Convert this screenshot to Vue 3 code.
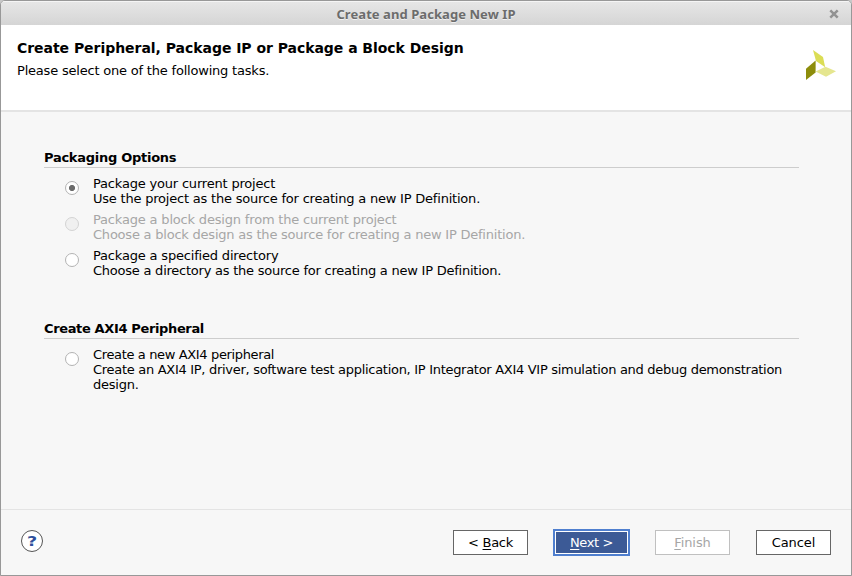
<script setup>
import { ref } from 'vue'

const selected = ref('project')

// tracking: letter spacing of each text, in px
const sections = [
  {
    title: 'Packaging Options',
    tracking: -0.27,
    options: [
      {
        id: 'project',
        lines: [
          { text: 'Package your current project', tracking: -0.19 },
          { text: 'Use the project as the source for creating a new IP Definition.', tracking: -0.21 },
        ],
      },
      {
        id: 'block',
        disabled: true,
        lines: [
          { text: 'Package a block design from the current project', tracking: -0.18 },
          { text: 'Choose a block design as the source for creating a new IP Definition.', tracking: -0.22 },
        ],
      },
      {
        id: 'directory',
        lines: [
          { text: 'Package a specified directory', tracking: -0.18 },
          { text: 'Choose a directory as the source for creating a new IP Definition.', tracking: -0.235 },
        ],
      },
    ],
  },
  {
    title: 'Create AXI4 Peripheral',
    tracking: -0.36,
    options: [
      {
        id: 'axi',
        lines: [
          { text: 'Create a new AXI4 peripheral', tracking: -0.36 },
          { text: 'Create an AXI4 IP, driver, software test application, IP Integrator AXI4 VIP simulation and debug demonstration', tracking: -0.295 },
          { text: 'design.', tracking: -0.25 },
        ],
      },
    ],
  },
]

function choose(option) {
  if (!option.disabled) selected.value = option.id
}
</script>

<template>
  <div class="window">
    <div class="titlebar">
      <span class="side"></span>
      <span class="caption">Create and Package New IP</span>
      <span class="side">
        <svg class="close" width="10" height="10" viewBox="0 0 10 10"><path d="M1.3 1.3 8.7 8.7M8.7 1.3 1.3 8.7" /></svg>
      </span>
    </div>

    <header class="header">
      <div>
        <h1>Create Peripheral, Package IP or Package a Block Design</h1>
        <p>Please select one of the following tasks.</p>
      </div>
      <svg class="logo" width="30" height="30" viewBox="0 0 30 30">
        <path d="M7 0 17 7 19.2 17.2 10 11Z" fill="#dbdd55" />
        <path d="M0 18.8 9.6 10.6V22.4L0 30Z" fill="#8d8d0b" />
        <path d="M9.6 21.6 19.5 16.8 30 21.3 20 26.8Z" fill="#e5e68f" />
      </svg>
    </header>

    <main class="content">
      <section v-for="s in sections" :key="s.title" class="section">
        <h2 :style="{ letterSpacing: s.tracking + 'px' }">{{ s.title }}</h2>
        <div class="options">
          <div v-for="o in s.options" :key="o.id" :class="['option', { disabled: o.disabled }]" @click="choose(o)">
            <span :class="['radio', { on: selected === o.id }]"></span>
            <div>
              <div v-for="l in o.lines" :key="l.text" :style="{ letterSpacing: l.tracking + 'px' }">{{ l.text }}</div>
            </div>
          </div>
        </div>
      </section>
    </main>

    <footer class="footer">
      <button class="help"><span>?</span></button>
      <div class="buttons">
        <button class="btn back">&lt; <u>B</u>ack</button>
        <button class="btn primary"><u>N</u>ext &gt;</button>
        <button class="btn" disabled><u>F</u>inish</button>
        <button class="btn cancel">Cancel</button>
      </div>
    </footer>
  </div>
</template>

<style>
body {
  background: #c8c8c8;
}
</style>

<style scoped>
* {
  box-sizing: border-box;
}
.window {
  width: 852px;
  height: 576px;
  display: flex;
  flex-direction: column;
  border: 1px solid #989898;
  border-radius: 5px 5px 0 0;
  background: #f7f7f7;
  color: #000;
  overflow: hidden;
  font: 13px/15px "DejaVu Sans", sans-serif;
  white-space: nowrap;
}
.titlebar {
  height: 24px;
  flex: none;
  display: flex;
  align-items: center;
  justify-content: space-between;
  background: linear-gradient(#e6e6e6, #d5d5d5);
  border-top: 1px solid #f5f5f5;
  padding: 0 12px;
}
.side {
  width: 10px;
  display: flex;
}
.caption {
  font: bold 13px/18px "Noto Sans", sans-serif;
  letter-spacing: 0.06px;
  color: #6c6c6c;
  text-shadow: 0 1px 0 #f0f0f0;
}
.close {
  stroke: #929292;
  stroke-width: 2.5;
  margin-top: 1px;
}
.header {
  height: 87px;
  flex: none;
  display: flex;
  justify-content: space-between;
  background: #fff;
  border-bottom: 2px solid #e4e4e4;
  padding: 14px 15px 0 16px;
}
h1 {
  margin: 1px 0 0;
  font-size: 14px;
  line-height: 17px;
  letter-spacing: -0.04px;
}
p {
  margin: 6px 0 0;
  letter-spacing: -0.2px;
}
.logo {
  margin-top: 11px;
}
.content {
  flex: 1;
  padding: 38px 52px 0 43px;
}
.section + .section {
  margin-top: 43px;
}
h2 {
  margin: 0;
  font-size: 13px;
  line-height: 15px;
  padding-bottom: 2px;
  border-bottom: 1px solid #cdcdcd;
}
.options {
  display: grid;
  gap: 6px;
  padding: 8px 0 0 21px;
}
.option {
  display: flex;
  gap: 14px;
}
.radio {
  width: 14px;
  height: 14px;
  flex: none;
  margin-top: 5px;
  border: 1px solid #b3b3b3;
  border-radius: 50%;
  background: #fff;
}
.radio.on {
  background: radial-gradient(circle, #6b6b6b 2.7px, #fff 3.4px);
}
.disabled {
  color: #a6a6a6;
}
.disabled .radio {
  background: #f0f0f0;
  border-color: #d3d3d3;
}
.footer {
  height: 66px;
  flex: none;
  display: flex;
  justify-content: space-between;
  border-top: 1px solid #e4e4e4;
  padding: 19px 20px 0;
}
.help {
  width: 22px;
  height: 22px;
  margin-top: 1px;
  padding: 0;
  border: 1px solid #555;
  border-radius: 50%;
  background: #fff;
  color: #2f4f9b;
  font: bold 14px/20px "DejaVu Sans", sans-serif;
  text-align: center;
}
.help span {
  display: inline-block;
  transform: scaleX(1.25);
}
.buttons {
  display: flex;
  gap: 25px;
}
.btn {
  width: 75px;
  height: 25px;
  margin-top: 1px;
  padding: 0;
  border: 1px solid #666;
  background: #fff;
  color: #000;
  font: 13px/23px "DejaVu Sans", sans-serif;
  letter-spacing: -0.1px;
}
.btn.back {
  letter-spacing: -0.3px;
}
.btn.cancel {
  margin-left: 1px;
}
.btn u {
  text-underline-offset: 2px;
  text-decoration-thickness: 1px;
  text-decoration-skip-ink: none;
}
.btn:disabled {
  border-color: #c0c0c0;
  color: #a6a6a6;
}
.btn.primary {
  width: 77px;
  height: 27px;
  margin-top: 0;
  border: 2px solid #4f7fcf;
  box-shadow: inset 0 0 0 1px #fff;
  background: #3c5a96;
  color: #fff;
  letter-spacing: -0.4px;
}
</style>
